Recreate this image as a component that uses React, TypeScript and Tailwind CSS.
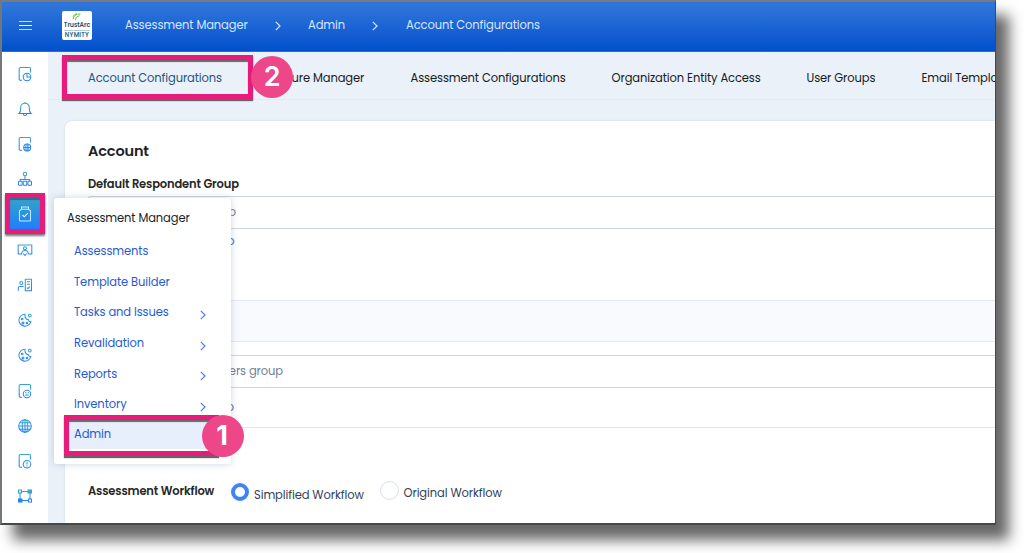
import React from "react";

const tabs = [
  { label: "Feature Manager", cls: "ml-[46px] w-[97px] text-right" },
  { label: "Assessment Configurations", cls: "ml-[46.500px] w-[155px]" },
  { label: "Organization Entity Access", cls: "ml-[46px] w-[149px]" },
  { label: "User Groups", cls: "ml-[46px] w-[69px]" },
  { label: "Email Templates", cls: "ml-[46px] w-[95px]" },
];

const menu = [
  { label: "Assessments", sub: false },
  { label: "Template Builder", sub: false },
  { label: "Tasks and Issues", sub: true },
  { label: "Revalidation", sub: true },
  { label: "Reports", sub: true },
  { label: "Inventory", sub: true },
];

function Chevron({ className }: { className: string }) {
  return (
    <svg viewBox="0 0 6 10" className={className} fill="none" stroke="currentColor" strokeWidth="1.2">
      <path d="M.8.8 5 5 .8 9.2" />
    </svg>
  );
}

const page = <path d="M4 13.200H2.200a1 1 0 0 1-1-1V1.500a1 1 0 0 1 1-1H11.500a1 1 0 0 1 1 1v4" />;

const cookie = (
  <>
    <path d="M7 1.200A6 6 0 1 0 12.800 8.500C11.300 8.700 10.500 7.800 10.500 6.800 8.400 6.800 6.600 5 7 1.200Z" />
    <circle cx="11.800" cy="2.600" r="1.400" />
    <circle cx="4.200" cy="6" r=".8" />
    <circle cx="5" cy="10" r="1" />
    <circle cx="9" cy="10" r=".7" />
  </>
);

const icons: React.ReactNode[] = [
  <>{page}<circle cx="9" cy="10" r="3.800" /><path d="M9 6.200V10h3.800" /></>,
  <><path d="M1 11.500C2.900 10 2.700 8.500 2.700 5.500a4.300 4.300 0 0 1 8.600 0c0 3 -.2 4.500 1.700 6Z" /><path d="M5.300 11.800a1.700 1.700 0 0 0 3.400 0M7 1.200V0" /></>,
  <>{page}<circle cx="9.200" cy="10.400" r="3.500" /><path d="M5.800 10.400h6.800M9.200 7v6.800" /><ellipse cx="9.200" cy="10.400" rx="1.700" ry="3.500" strokeWidth=".7" /></>,
  <><circle cx="7" cy="2" r="1.800" /><path d="M7 3.800v4.200M2.300 9V7.500h9.400V9" /><rect x=".5" y="9.200" width="3.600" height="4" rx=".7" /><rect x="5.200" y="9.200" width="3.600" height="4" rx=".7" /><rect x="9.900" y="9.200" width="3.600" height="4" rx=".7" /></>,
  null,
  <><path d="M4 11H.2V2h13.600v9H10M3.800 10.500c0-4 6.400-4 6.400 0M5.300 10.500 7 12.500l1.700-2" /><circle cx="7" cy="5.300" r="1.500" /></>,
  <><path d="M7.300 1.200h6.200v11.600H7.300ZM9 3.800h3M9 6.300h3M8.900 9.600l1 1 2-2M.3 12.800V10Q.3 8.500 1.800 8.500h3.700" /><circle cx="3.300" cy="5" r="1.500" /></>,
  cookie,
  cookie,
  <>{page}<circle cx="9" cy="10" r="3.700" /><path d="M7.200 8.700h1.300M9.700 8.700H11M7.200 11h3.600" /></>,
  <><circle cx="7" cy="7" r="6.300" /><ellipse cx="7" cy="7" rx="2.800" ry="6.300" /><path d="M.7 7h12.600M1.800 3.700h10.400M1.800 10.300h10.400M7 .7v12.600" /></>,
  <>{page}<circle cx="9" cy="10.200" r="3.800" /><path d="M9 8v2.600M9 11.500v.9" /></>,
  <><rect x=".5" y="1" width="3" height="3" /><rect x="10" y="1" width="3.500" height="3" fill="#3aa5cf" /><rect x=".5" y="10" width="3.500" height="3" fill="#257cff" /><rect x="10.500" y="10" width="3" height="3" /><path d="M4 2.500h6M2 4v6M12 4v6M4 11.500h6" /></>,
];

function Sidebar() {
  return (
    <nav className="flex h-[471px] w-[46px] shrink-0 flex-col items-center bg-white pt-[4px] shadow-[2px_0_8px_rgba(70,120,170,0.18)]">
      {icons.map((shape, i) => (
        <div key={i} className="flex h-[35.230px] w-full shrink-0 items-center justify-center">
          {shape ? (
            <svg viewBox="0 0 14 14" className="size-[14px] overflow-visible" fill="none" stroke={`url(#tone${i})`} strokeWidth="1.050">
              <defs>
                <linearGradient id={`tone${i}`} gradientUnits="userSpaceOnUse" x1="0" y1="0" x2="0" y2="14">
                  <stop stopColor="#38a9c8" />
                  <stop offset="1" stopColor="#247cff" />
                </linearGradient>
              </defs>
              {shape}
            </svg>
          ) : (
            <div className="flex size-[30px] shrink-0 items-center justify-center bg-linear-to-b from-[#35a1c7] to-[#247cff]">
              <svg viewBox="0 0 14 16" className="h-[16px] w-[14px]" fill="none" stroke="#bfecff" strokeWidth="1.100">
                <path d="M3.500 3.200V1h7v2.200M3.500 3.200h7l2 1.600V14a1 1 0 0 1-1 1h-9a1 1 0 0 1-1-1V4.800Z" />
                <path d="m4.500 9 1.800 1.800 3.500-3.600" stroke="#fff" />
              </svg>
            </div>
          )}
        </div>
      ))}
    </nav>
  );
}

function Logo() {
  return (
    <div className="ml-[30px] flex h-[29px] w-[30px] flex-col items-center rounded-[2px] bg-white pt-[2px]">
      <svg viewBox="0 0 12 9" className="h-[8px] w-[12px] shrink-0" fill="none" stroke="#68bd45" strokeWidth="1.100">
        <path d="M1.500 7Q2 1.500 10 .9M4 8Q4.500 3.500 9 3M1.500 4Q3 .8 6 .7" />
      </svg>
      <span className="text-[6.300px] leading-[8px] font-semibold text-[#264f70]">TrustArc</span>
      <span className="mt-px h-px w-[26px] shrink-0 bg-[#b8cbd8]" />
      <span className="mt-px text-[6px] leading-[7px] font-semibold tracking-[0.300px] text-[#315f80]">NYMITY</span>
    </div>
  );
}

function Header() {
  return (
    <header className="flex h-[50px] shrink-0 items-center border-b border-[#2470d8] bg-linear-to-b from-[#3177da] to-[#0050cd] pb-[2px] text-[11.500px] tracking-[-0.100px] text-[#d7e6ff]">
      <div className="ml-[17px] flex w-[13px] flex-col gap-[3px]">
        <i className="h-px bg-[#c4d9fb]" /><i className="h-px bg-white" /><i className="h-px bg-[#c4d9fb]" />
      </div>
      <Logo />
      <span className="ml-[33px] w-[122px] whitespace-nowrap">Assessment Manager</span>
      <Chevron className="ml-[28px] h-[10px] w-[6px]" />
      <span className="ml-[27px] w-[38px]">Admin</span>
      <Chevron className="ml-[26px] h-[10px] w-[6px]" />
      <span className="ml-[28px] whitespace-nowrap">Account Configurations</span>
    </header>
  );
}

function Content() {
  return (
    <main className="flex min-w-0 flex-1 flex-col bg-[#eaf1f9]">
      <div className="flex h-[48px] shrink-0 items-center overflow-hidden border-b border-[#e5ebf1] pt-[6px] pl-[40px] whitespace-nowrap text-[#171b22]">
        <span className="w-[133px] shrink-0 text-[#235684]">Account Configurations</span>
        {tabs.map((t) => <span key={t.label} className={`shrink-0 ${t.cls}`}>{t.label}</span>)}
      </div>
      <section className="mt-[21px] ml-[17px] flex flex-1 flex-col rounded-tl-[7px] bg-white shadow-[0_0_2px_#c7d5e3]">
        <h1 className="mt-[19px] ml-[23px] h-[22px] text-[14.500px] leading-[22px] font-semibold tracking-[-0.150px] text-[#202124]">Account</h1>
        <h2 className="mt-[13px] ml-[23px] h-[18px] leading-[18px] font-semibold tracking-[-0.150px] text-[#262626]">Default Respondent Group</h2>
        <div className="mt-[3px] ml-[23px] flex h-[33px] items-center rounded-l-[3px] border border-r-0 border-[#cdd5e2] text-[#718096]">
          <span className="w-[147px] text-right">Select Group</span>
        </div>
        <div className="flex h-[71px] pt-[3px] leading-[18px] text-[#3c73df]">
          <span className="w-[169.500px] text-right">Create Group</span>
        </div>
        <div className="ml-[23px] h-[42px] border-y border-[#e3e8f1] bg-[#f9fafe]" />
        <div className="mt-[13px] ml-[23px] flex h-[33px] items-center border border-r-0 border-[#cdd5e2] text-[#718096]">
          <span className="w-[194px] pt-px text-right whitespace-nowrap">Approvers group</span>
        </div>
        <div className="ml-[23px] flex h-[40px] items-center border-b border-[#dfe4ee] text-[#3c73df]">
          <span className="w-[146px] text-right">Create Group</span>
        </div>
        <div className="flex flex-1 items-start pt-[53px] pl-[23px]">
          <span className="mt-[2px] w-[127px] leading-[17px] font-semibold tracking-[-0.150px] whitespace-nowrap text-[#262626]">Assessment Workflow</span>
          <span className="mt-[2px] ml-[15.500px] size-[18px] shrink-0 rounded-full border-[4.500px] border-[#4083f7]" />
          <span className="mt-[6px] ml-[5.500px] w-[110px] leading-[17px] whitespace-nowrap text-[#354155]">Simplified Workflow</span>
          <span className="ml-[15.500px] size-[19px] shrink-0 rounded-full border border-[#d8e0ec]" />
          <span className="mt-[4px] ml-[5px] leading-[17px] whitespace-nowrap text-[#354155]">Original Workflow</span>
        </div>
      </section>
    </main>
  );
}

function Menu() {
  return (
    <aside className="absolute top-[198px] left-[54px] flex h-[266px] w-[177px] flex-col rounded-[3px] bg-white shadow-[0_0_7px_rgba(75,100,145,0.28)]">
      <span className="mt-[10px] ml-[13px] h-[20px] leading-[20px] text-[#1b1d22]">Assessment Manager</span>
      <div className="mt-[8.500px] flex flex-col">
        {menu.map((m) => (
          <div key={m.label} className="flex h-[30.600px] items-center pl-[20px] text-[#1f5bd2]">
            <span className="w-[126px]">{m.label}</span>
            {m.sub && <Chevron className="mt-[4px] h-[10px] w-[6px] text-[#4a80ea]" />}
          </div>
        ))}
        <div className="ml-[14px] mt-[1.500px] flex h-[27px] w-[154px] items-center bg-[#e7eefc] pl-[6px] text-[#1f5bd2]">Admin</div>
      </div>
    </aside>
  );
}

export default function App() {
  return (
    <div className="relative h-[553px] w-[1024px] overflow-hidden bg-white font-['Poppins','Inter',sans-serif] text-[11.500px] tracking-[-0.100px]">
      <div className="flex h-[525px] w-[996px] flex-col overflow-hidden border-t-2 border-r-[1.500px] border-b-2 border-l-2 border-t-[#777b80] border-r-[#44484b] border-b-[#44484b] border-l-[#74777a] shadow-[13px_15px_13px_rgba(0,0,0,0.6)]">
        <Header />
        <div className="flex min-h-0 flex-1">
          <Sidebar />
          <Content />
        </div>
      </div>
      <Menu />
      <div className="absolute top-[54.500px] left-[62px] h-[44px] w-[191px] border-[5px] border-[#e61b7c] shadow-[0_2px_1px_#666,inset_0_2px_1px_#666]" />
      <div className="absolute top-[193px] left-[5px] h-[41px] w-[40px] border-[5px] border-[#e61b7c] shadow-[0_2px_2px_#777,inset_0_2px_1px_#28718b]" />
      <div className="absolute top-[415px] left-[64px] h-[41px] w-[155px] border-[5px] border-[#e61b7c] shadow-[0_2px_1px_#666,inset_0_2px_1px_#666]" />
      <div className="absolute top-[56px] left-[251px] flex size-[42px] items-center justify-center rounded-full bg-[#ed4789] font-['Inter',sans-serif] text-[27px] font-semibold text-white">2</div>
      <div className="absolute top-[415px] left-[202px] flex size-[42px] items-center justify-center rounded-full bg-[#ed4789] pr-[2px] font-['Inter',sans-serif] text-[27px] font-bold text-white">1</div>
    </div>
  );
}
